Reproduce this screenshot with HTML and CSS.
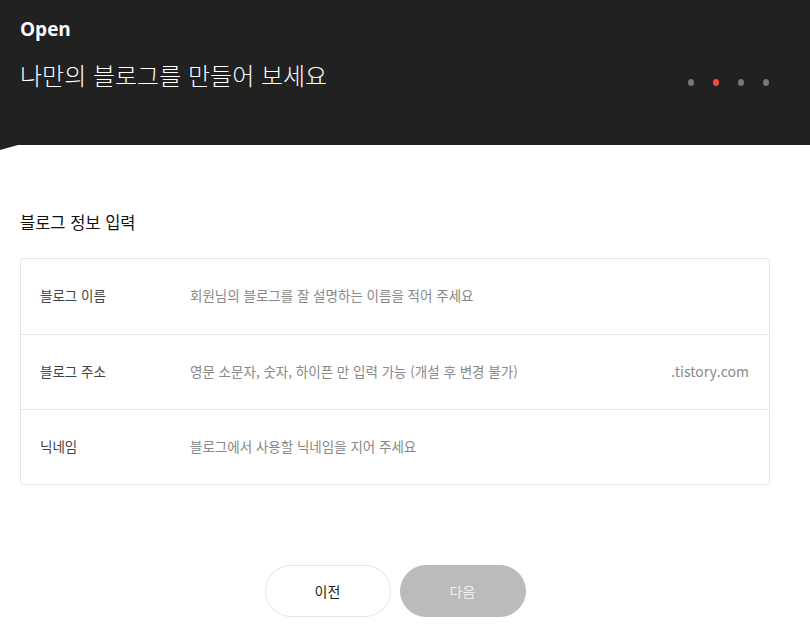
FILE: index.html
```html
<!DOCTYPE html>
<html lang="ko">
<head>
  <meta charset="UTF-8" />
  <meta name="viewport" content="width=device-width, initial-scale=1.0">
  <title>블로그 개설</title>
  <link rel="stylesheet" href="styles.css">
</head>
<body>
  <div class="header">
    <div class="brand">Open</div>
    <div class="header-row">
      <h1>나만의 블로그를 만들어 보세요</h1>
      <div class="steps">
        <span class="dot"></span>
        <span class="dot on"></span>
        <span class="dot"></span>
        <span class="dot"></span>
      </div>
    </div>
  </div>

  <div class="content">
    <h2>블로그 정보 입력</h2>
    <div class="form-box">
      <div class="row">
        <label>블로그 이름</label>
        <input type="text" placeholder="회원님의 블로그를 잘 설명하는 이름을 적어 주세요">
      </div>
      <div class="row">
        <label>블로그 주소</label>
        <input type="text" placeholder="영문 소문자, 숫자, 하이픈 만 입력 가능 (개설 후 변경 불가)">
        <span class="suffix">.tistory.com</span>
      </div>
      <div class="row">
        <label>닉네임</label>
        <input type="text" placeholder="블로그에서 사용할 닉네임을 지어 주세요">
      </div>
    </div>

    <div class="buttons">
      <button class="btn prev">이전</button>
      <button class="btn next" disabled>다음</button>
    </div>
  </div>
</body>
</html>
```

FILE: styles.css
```css
body {
  margin: 0;
  background: #fff;
  font-family: "Noto Sans CJK KR", "Noto Sans", sans-serif;
  color: #222;
}
.header {
  position: relative;
  height: 145px;
  box-sizing: border-box;
  background: #212121;
  color: #fff;
  padding: 14px 20px 0 20px;
}
/* little slanted edge under the header */
.header::after {
  content: "";
  position: absolute;
  left: 0;
  top: 145px;
  width: 18px;
  height: 5px;
  background: #212121;
  clip-path: polygon(0 0, 100% 0, 0 100%);
}
.brand {
  font-family: "Open Sans", "Noto Sans", sans-serif;
  font-weight: 700;
  font-size: 19px;
  line-height: 30px;
}
.header-row {
  display: flex;
  justify-content: space-between;
  align-items: center;
}
.header-row h1 {
  margin: 0;
  font-size: 24px;
  font-weight: 300;
  line-height: 38px;
  padding-top: 12px;
}
.steps {
  display: flex;
  gap: 19px;
  margin-right: 21px;
  margin-top: 26px;
}
.dot {
  width: 6px;
  height: 7px;
  border-radius: 50%;
  background: #777;
}
.dot.on {
  background: #fa4a36;
}
.content {
  padding: 0 40px 0 20px;
}
.content h2 {
  margin: 0;
  padding-top: 62px;
  font-size: 16.5px;
  font-weight: 400;
  line-height: 30px;
  color: #111;
}
.form-box {
  margin-top: 21px;
  border: 1px solid #e5e5e5;
  border-radius: 3px;
}
.row {
  display: flex;
  align-items: center;
  box-sizing: border-box;
  height: 75px;
  padding: 0 20px 3px 19px;
  border-top: 1px solid #e5e5e5;
}
.row:first-child {
  border-top: 0;
}
.row label {
  width: 150px;
  font-size: 13.5px;
  color: #444;
}
.row input {
  flex: 1;
  border: 0;
  outline: none;
  padding: 0;
  font-family: inherit;
  font-size: 13.5px;
  color: #333;
  background: transparent;
}
.row input::placeholder {
  color: #888;
}
.suffix {
  font-size: 14px;
  color: #888;
}
.buttons {
  display: flex;
  justify-content: center;
  gap: 9px;
  margin-top: 80px;
}
.btn {
  width: 126px;
  height: 52px;
  border-radius: 26px;
  font-family: inherit;
  font-size: 14px;
}
.btn.prev {
  background: #fff;
  border: 1px solid #e5e5e5;
  color: #222;
}
.btn.next {
  background: #bbb;
  border: 1px solid #bbb;
  color: #f0f0f0;
}
```
